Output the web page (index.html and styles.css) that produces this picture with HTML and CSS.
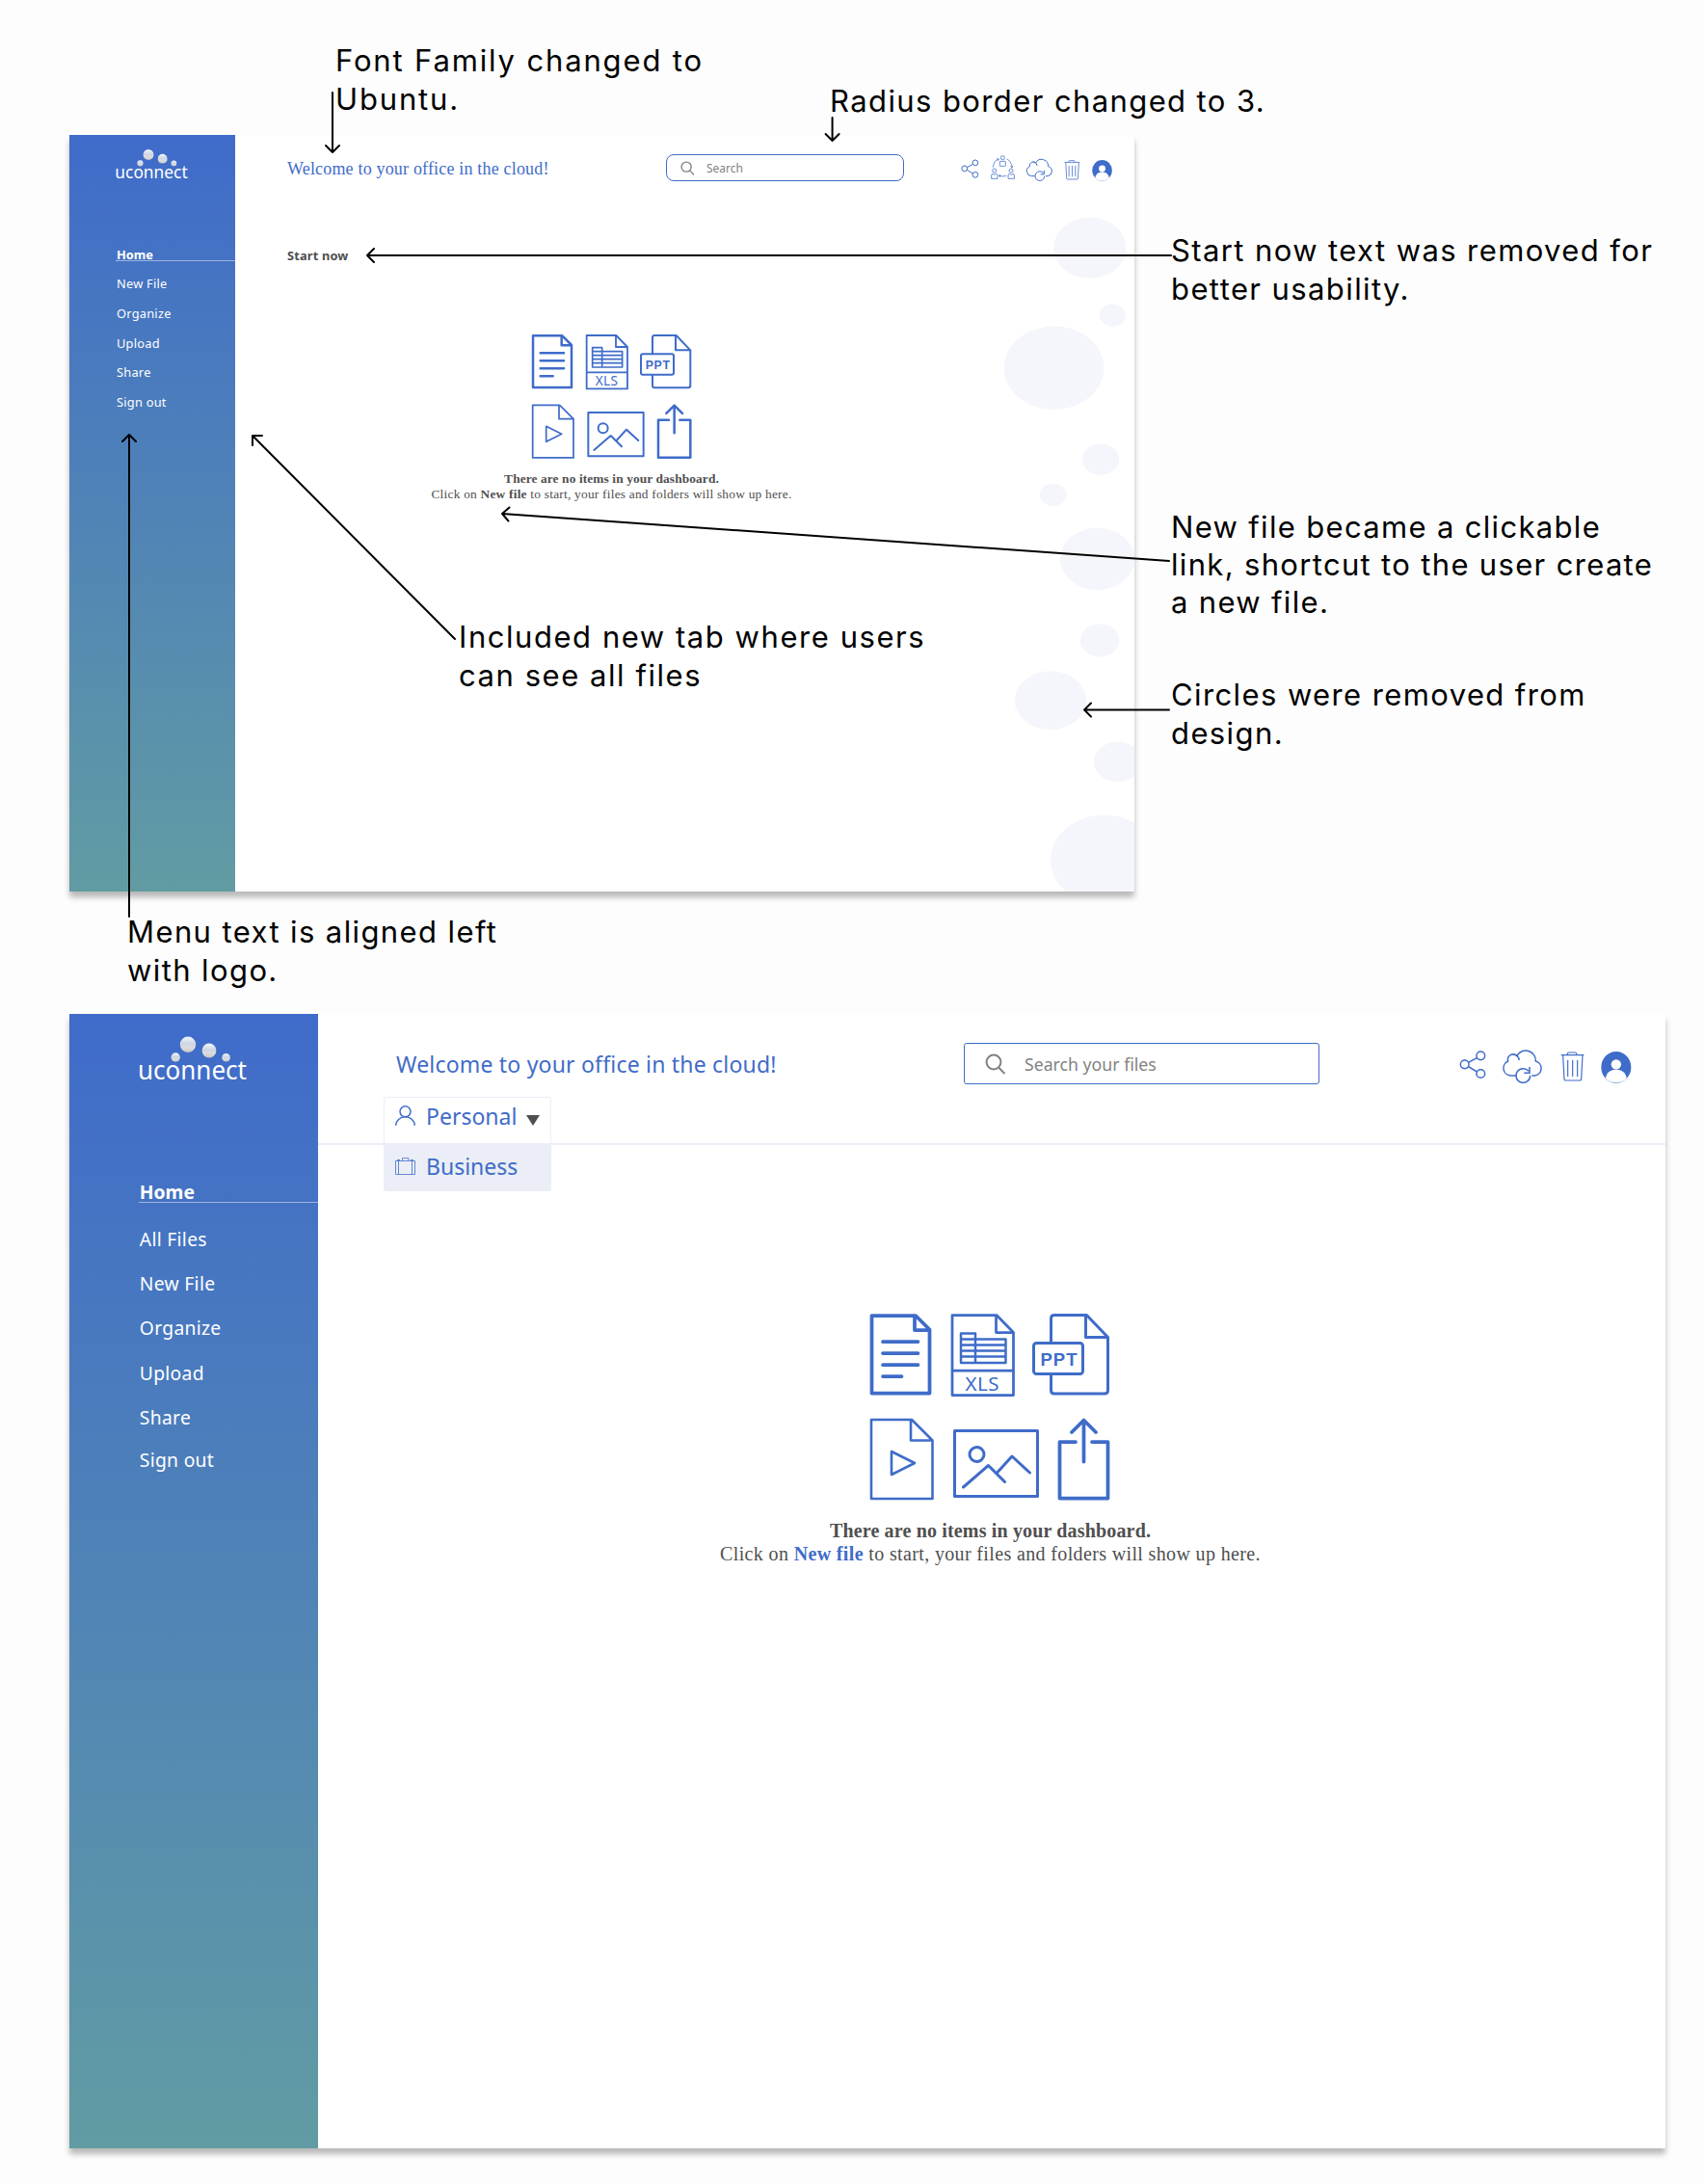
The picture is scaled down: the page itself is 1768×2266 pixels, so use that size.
FILE: index.html
```html
<!DOCTYPE html>
<html lang="en">
<head>
<meta charset="utf-8">
<title>uconnect dashboard review</title>
<link rel="stylesheet" href="styles.css">
</head>
<body>
<svg class="defs" width="0" height="0" aria-hidden="true">
  <defs>
    <linearGradient id="pearl" x1="0" y1="0" x2="0" y2="1">
      <stop offset="0" stop-color="#f4f6fa"/><stop offset=".45" stop-color="#cdd5e6"/><stop offset=".7" stop-color="#dcdcdc"/><stop offset="1" stop-color="#c9c9c9"/>
    </linearGradient>
    <symbol id="logo" viewBox="0 0 114 54">
      <g fill="url(#pearl)"><circle cx="51" cy="9.7" r="8.2"/><circle cx="73" cy="16" r="7.4"/><circle cx="38.2" cy="23" r="4.7"/><circle cx="90.6" cy="23.2" r="4.3"/></g>
      <text x="-1" y="46" class="logo-text" textLength="113" lengthAdjust="spacingAndGlyphs">uconnect</text>
    </symbol>
    <symbol id="i-search" viewBox="0 0 22 22"><circle cx="9" cy="9" r="7.4"/><path d="M14 14.5L20.5 21"/></symbol>
    <symbol id="i-share" viewBox="102 54 84 111"><circle cx="119" cy="103" r="13"/><circle cx="169" cy="76" r="13"/><circle cx="169" cy="132" r="13"/><path d="M131 97L157 83M131 110L157 126"/></symbol>
    <symbol id="i-cloud" viewBox="235 54 131 111"><path d="M279 138H263A23.500 23.500 0 0 1 255 93A17 17 0 0 1 283 76A31 31 0 0 1 341 93A23 23 0 0 1 339 138H329M270 72Q288 74 290 90"/><path d="M319 124A22 22 0 1 0 324 138M305 130H322V111"/></symbol>
    <symbol id="i-trash" viewBox="417 54 75 111"><path d="M419 74H490M439 73V70Q439 66 443 66H463Q467 66 467 70V73M425 75L429 149Q429 153 433 153H478Q482 153 482 149L486 75M440 90V141M455 90V141M470 90V141"/></symbol>
    <symbol id="i-user" viewBox="545 54 96 111"><ellipse cx="592.500" cy="112" rx="46.500" ry="49" fill="currentColor" stroke="none"/><circle cx="592.500" cy="103" r="15.500" fill="#fff" stroke="none"/><path d="M560 147C562 110 623 110 625 147C612 164 573 164 560 147Z" fill="#fff" stroke="none"/></symbol>
    <symbol id="i-group" viewBox="141 60 80 80"><circle cx="181" cy="71" r="6"/><rect x="172" y="82" width="18" height="15" rx="2"/><circle cx="155" cy="111" r="6"/><path d="M146 136V126Q146 121 150 121L155 124L160 121Q165 121 165 126V136Z"/><circle cx="207" cy="111" r="6"/><path d="M198 136V126Q198 121 202 121L207 124L212 121Q217 121 217 126V136Z"/><path d="M151 101C152 89 158 79 168 75M163 74L169 75L166 80M194 75C203 79 209 88 210 100M206 97L210 102L213 96M192 127Q181 131 170 127M174 124L169 127L174 131"/></symbol>
    <symbol id="i-person" viewBox="0 0 21 21"><circle cx="10.500" cy="6.300" r="5.500"/><path d="M.7 20.800A9.800 9 0 0 1 20.300 20.800"/></symbol>
    <symbol id="i-case" viewBox="0 0 21 18"><path d="M.5 3.500H20.500V17.500H.5ZM3.500 3.500V17.500M17.500 3.500V17.500M7.500 3V.7H14V3M2 2.500H5M16 2.500H19"/></symbol>
    <symbol id="files" viewBox="360 75 510 400">
      <g stroke-width="7.500"><path d="M369 85H460L489 114V246H369ZM458 87V115H489M392 139H465M392 163H465M392 187H465M392 211H431"/></g>
      <g stroke-width="5.500"><path d="M536 84H628L663 120V250H536ZM627 84V120H663M536 199H663"/><path stroke-width="5" d="M554 122H584V183M554 122V183H647V134H554M554 146H647M554 158H647M554 170H647"/></g>
      <text x="563" y="241" class="tag" textLength="70">XLS</text>
      <g stroke-width="6"><path d="M741 142V91Q741 84 748 84H815L859 130V240Q859 247 852 247H748Q741 247 741 240V207M813 84V130H859"/><rect x="705" y="142" width="102" height="64" rx="6"/></g>
      <text x="719" y="188" class="tag tag-bold" textLength="76">PPT</text>
      <g stroke-width="5.200"><path d="M368 301H452L495 344V465H368ZM450 301V344H495M410 367L458 391L410 415Z"/></g>
      <g stroke-width="6"><rect x="541" y="324" width="172" height="136"/><ellipse cx="587" cy="373" rx="15" ry="15"/><path d="M559 441L611 396L645 430M629 411L660 377L697 411"/></g>
      <g stroke-width="7.500"><path d="M792 347H759V464H859V347H826M809 388V303M784 327L809 302L834 327"/></g>
    </symbol>
  </defs>
</svg>
<div class="board">
  <section class="card card-before">
    <aside class="sidebar">
      <svg class="logo"><use href="#logo"/></svg>
      <ul class="menu">
        <li class="active">Home</li><li>New File</li><li>Organize</li><li>Upload</li><li>Share</li><li>Sign out</li>
      </ul>
    </aside>
    <main class="main">
      <header class="topbar">
        <h1 class="welcome">Welcome to your office in the cloud!</h1>
        <div class="search"><svg class="icon"><use href="#i-search"/></svg><span>Search</span></div>
        <div class="tools"><svg class="icon w-share"><use href="#i-share"/></svg><svg class="icon w-group"><use href="#i-group"/></svg><svg class="icon w-cloud"><use href="#i-cloud"/></svg><svg class="icon w-trash"><use href="#i-trash"/></svg><svg class="icon w-user"><use href="#i-user"/></svg></div>
      </header>
      <h2 class="start">Start now</h2>
      <div class="empty">
        <svg class="files"><use href="#files"/></svg>
        <p class="lead">There are no items in your dashboard.</p>
        <p class="hint">Click on <b>New file</b> to start, your files and folders will show up here.</p>
      </div>
      <svg class="bubbles" viewBox="1040 140 137 785">
        <ellipse cx="1130.800" cy="257.100" rx="37.600" ry="31.600"/><ellipse cx="1154.300" cy="327" rx="13.700" ry="11.500"/><ellipse cx="1093.500" cy="381.700" rx="51.800" ry="43.300"/><ellipse cx="1142" cy="476.500" rx="19.300" ry="16.200"/><ellipse cx="1092.800" cy="513.400" rx="13.900" ry="11.600"/><ellipse cx="1138.600" cy="580" rx="38.700" ry="32.300"/><ellipse cx="1141" cy="664.400" rx="20.300" ry="17"/><ellipse cx="1089.900" cy="726.700" rx="37" ry="30.400"/><ellipse cx="1159.700" cy="790.400" rx="25" ry="20.800"/><ellipse cx="1146" cy="892.300" rx="55.800" ry="46.700"/>
      </svg>
    </main>
  </section>

  <section class="card card-after">
    <aside class="sidebar">
      <svg class="logo"><use href="#logo"/></svg>
      <ul class="menu">
        <li class="active">Home</li><li>All Files</li><li>New File</li><li>Organize</li><li>Upload</li><li>Share</li><li>Sign out</li>
      </ul>
    </aside>
    <main class="main">
      <header class="topbar">
        <h1 class="welcome">Welcome to your office in the cloud!</h1>
        <div class="search"><svg class="icon"><use href="#i-search"/></svg><span>Search your files</span></div>
        <div class="tools"><svg class="icon w-share"><use href="#i-share"/></svg><svg class="icon w-cloud"><use href="#i-cloud"/></svg><svg class="icon w-trash"><use href="#i-trash"/></svg><svg class="icon w-user"><use href="#i-user"/></svg></div>
        <div class="account">
          <div class="account-row current"><svg class="icon person"><use href="#i-person"/></svg><span>Personal</span><i class="caret"></i></div>
          <div class="account-row option"><svg class="icon case"><use href="#i-case"/></svg><span>Business</span></div>
        </div>
      </header>
      <div class="empty">
        <svg class="files"><use href="#files"/></svg>
        <p class="lead">There are no items in your dashboard.</p>
        <p class="hint">Click on <a>New file</a> to start, your files and folders will show up here.</p>
      </div>
    </main>
  </section>

  <svg class="arrows" viewBox="0 0 1768 2266">
    <path d="M345 96V158M338 151L345 158L352 151"/>
    <path d="M863.600 122V146M856.600 139L863.600 146L870.600 139"/>
    <path d="M1215 265H381M388 258L381 265L388 272"/>
    <path d="M1213 582L521 533M528.500 526.500L521 533L527.500 540.500"/>
    <path d="M1213 736.500H1125M1132 729.500L1125 736.500L1132 743.500"/>
    <path d="M134 951V451M127 458L134 451L141 458"/>
    <path d="M472 663L262 452M272 452H262V462"/>
  </svg>
  <p class="note note-font">Font Family changed to<br>Ubuntu.</p>
  <p class="note note-radius">Radius border changed to 3.</p>
  <p class="note note-start">Start now text was removed for<br>better usability.</p>
  <p class="note note-link">New file became a clickable<br>link, shortcut to the user create<br>a new file.</p>
  <p class="note note-circles">Circles were removed from<br>design.</p>
  <p class="note note-tab">Included new tab where users<br>can see all files</p>
  <p class="note note-menu">Menu text is aligned left<br>with logo.</p>
</div>
</body>
</html>
```
FILE: styles.css
```css
* { box-sizing: border-box; }
body { margin: 0; background: #fdfdfd; font-family: "Noto Sans", "Open Sans", sans-serif; }
h1, h2, p, ul { margin: 0; padding: 0; font-weight: 400; }
ul { list-style: none; }
.defs { position: absolute; }
svg { display: block; overflow: visible; }

.board { position: relative; width: 1768px; height: 2266px; padding: 140px 0 0 72px; overflow: hidden; }
.card { display: flex; background: #fff; box-shadow: 0 6px 6px rgba(0, 0, 0, .27); }
.card-before { width: 1105px; height: 785px; margin-bottom: 127px; }
.card-after { width: 1656px; height: 1177px; }

.sidebar { flex: none; color: #fff; background: linear-gradient(#3f6bca, #619ca3); }
.main { flex: 1; position: relative; }
.logo-text { font: 28px "Noto Sans", sans-serif; fill: #fff; }
.menu li { white-space: nowrap; }
.menu .active { font-weight: 700; letter-spacing: 0; border-bottom: 1px solid #9fb2dc; }
.icon { flex: none; fill: none; stroke: currentColor; }
.topbar, .search, .tools { color: #3f6cc9; }
.topbar { display: grid; align-items: start; white-space: nowrap; }
.search { display: flex; align-items: center; border: 1.5px solid #3f6cc9; }
.search span { color: #828282; }
.search .icon { stroke: #828282; stroke-width: 2; }
.tools { display: flex; }
.tools .icon { stroke-width: 4.5; }
.tools .w-trash { stroke-width: 3.5; }
.tools .w-group { stroke-width: 2.3; }
.files { fill: none; stroke: #3f6cc9; stroke-linejoin: round; stroke-linecap: round; }
.tag { font: 41px "Noto Sans", sans-serif; fill: #3f6cc9; stroke: none; }
.tag-bold { font: 700 37px "Liberation Sans", sans-serif; }
.empty { display: flex; flex-direction: column; align-items: center; font-family: "Liberation Serif", serif; color: #4f4f4f; white-space: nowrap; }
.lead { font-weight: 700; }

.card-before .sidebar { width: 172px; padding: 14.300px 0 0 48px; }
.card-before .logo { width: 76px; height: 36px; }
.card-before .menu { margin-top: 63.500px; font-size: 12.800px; line-height: 20px; letter-spacing: .25px; }
.card-before .menu li { height: 30.670px; padding-left: 1px; }
.card-before .menu .active { height: 17px; margin-bottom: 13.670px; }
.card-before .topbar { height: 60px; padding-left: 54px; grid-template-columns: 393px 247px 1fr; }
.card-before .welcome { margin-top: 23.200px; font: 18px/24px "Liberation Serif", serif; letter-spacing: .18px; }
.card-before .search { height: 28px; margin-top: 20px; padding-left: 14px; gap: 12px; border-radius: 8px; font-size: 12px; }
.card-before .search .icon { width: 15px; height: 15px; }
.card-before .tools { margin: 23.800px 0 0 59.300px; gap: 11px; }
.card-before .tools .icon { height: 24.670px; }
.card-before .w-share { width: 18.700px; }
.card-before .w-cloud { width: 29.100px; margin-left: -1px; }
.card-before .w-trash { width: 16.700px; }
.card-before .w-user { width: 21.300px; margin-left: 1.500px; }
.card-before .tools .w-group { width: 26.700px; height: 26.700px; margin-top: -3.800px; }
.start { margin: 55.400px 0 0 54px; font: 700 12.800px/20px "Noto Sans", sans-serif; letter-spacing: .17px; color: #4f4f4f; }
.card-before .empty { width: 380px; margin: 69.600px 0 0 200.500px; font-size: 13.400px; line-height: 16px; }
.card-before .files { width: 170px; height: 133.300px; margin-bottom: 10.600px; }
.card-before .lead { letter-spacing: .1px; }
.card-before .hint { letter-spacing: .22px; }
.bubbles { position: absolute; right: 0; top: 0; width: 137px; height: 785px; overflow: hidden; fill: #f5f6fb; }

.card-after .sidebar { width: 258px; padding: 22px 0 0 72px; }
.card-after .logo { width: 114px; height: 54px; }
.card-after .menu { margin-top: 97.300px; font-size: 19.300px; line-height: 24px; letter-spacing: .3px; }
.card-after .menu li { height: 46.700px; padding-left: .8px; }
.card-after .menu .active { height: 22.700px; margin-bottom: 25.800px; }
.card-after .menu li:nth-child(3) { height: 45.200px; }
.card-after .menu li:nth-child(4) { height: 47px; }
.card-after .menu li:nth-child(6) { height: 44px; }
.card-after .topbar { position: relative; height: 136px; padding-left: 81px; grid-template-columns: 589px 369px 1fr; border-bottom: 2px solid #ebeef6; }
.card-after .welcome { margin-top: 36.500px; font-size: 23px; line-height: 30px; letter-spacing: .2px; }
.card-after .search { height: 43px; margin-top: 30px; padding-left: 21px; gap: 19px; border-radius: 3px; font-size: 17.700px; }
.card-after .search .icon { width: 22px; height: 22px; }
.card-after .tools { margin: 36px 0 0 145px; gap: 17px; }
.card-after .tools .icon { height: 37px; }
.card-after .w-share { width: 28px; }
.card-after .w-cloud { width: 43.670px; margin-left: -.7px; }
.card-after .w-trash { width: 25px; }
.card-after .w-user { width: 32px; margin-left: .5px; }
.card-after .empty { width: 1395px; margin-top: 171.500px; font-size: 20px; line-height: 24px; }
.card-after .files { width: 255px; height: 200px; margin-bottom: 16px; }
.card-after .lead { letter-spacing: .16px; }
.card-after .hint { letter-spacing: .36px; }
.card-after .hint a { font-weight: 700; color: #3f6cc9; }

.account { position: absolute; left: 68px; top: 86px; width: 174px; font-size: 23px; line-height: 30px; }
.account-row { display: flex; align-items: flex-start; padding-left: 12px; }
.account-row .icon { width: 21px; margin-right: 11px; }
.account-row.current { height: 48px; padding-top: 4px; background: #fff; border: 1px solid #ebeef6; border-bottom: 0; border-radius: 3px 3px 0 0; padding-left: 11px; }
.account-row.option { height: 50px; padding-top: 9px; background: #ebeef6; border-radius: 0 0 3px 3px; }
.person { height: 21px; margin-top: 4px; stroke-width: 1.500; }
.case { height: 18px; margin-top: 6px; stroke-width: .8; }
.caret { margin: 14px 0 0 10px; border: 7px solid transparent; border-top: 11px solid #4f4f4f; border-bottom: 0; }

.arrows { position: absolute; left: 0; top: 0; width: 1768px; height: 2266px; fill: none; stroke: #000; stroke-width: 2; stroke-linecap: round; stroke-linejoin: round; }
.note { position: absolute; font: 31px/40px Inter, sans-serif; letter-spacing: 1.4px; color: #000; white-space: nowrap; }
.note-font { left: 348px; top: 42.700px; letter-spacing: 1.85px; }
.note-radius { left: 861px; top: 84.700px; }
.note-start { left: 1215px; top: 240.400px; }
.note-link { left: 1215px; top: 527px; line-height: 39px; letter-spacing: 1.33px; }
.note-circles { left: 1215px; top: 701px; }
.note-tab { left: 476px; top: 641px; letter-spacing: 1.55px; }
.note-menu { left: 132px; top: 946.700px; }
```
